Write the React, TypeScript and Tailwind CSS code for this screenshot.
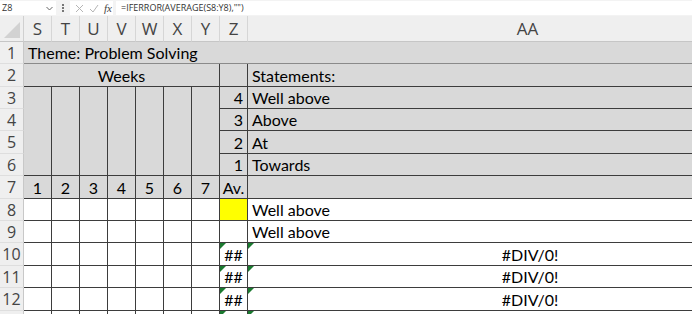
import type { ReactNode } from 'react'

const cols = ['S', 'T', 'U', 'V', 'W', 'X', 'Y', 'Z', 'AA']

// Error indicator Excel puts in the top-left corner of a cell
function ErrorMark() {
  return (
    <svg className="absolute left-0 top-0" width="6" height="6" viewBox="0 0 6 6">
      <polygon points="0,0 6,0 0,6" fill="#1b7a30" />
    </svg>
  )
}

function RowHead({ n }: { n?: number }) {
  return (
    <div className="flex items-center justify-center border-b border-r border-b-[#dedede] border-r-[#c8c8c8] bg-[#efefef] font-['Open_Sans',sans-serif] text-[16px] text-[#444]">
      {n}
    </div>
  )
}

function Cell({ className = '', children }: { className?: string; children?: ReactNode }) {
  return <div className={`relative flex items-end pb-[1px] leading-[18px] ${className}`}>{children}</div>
}

function FormulaBar() {
  return (
    <div className="flex h-[16px] items-center bg-[#f3f3f3] font-['Open_Sans',sans-serif] text-[9px] text-[#333]">
      <div className="flex h-[14px] w-[56px] items-center justify-between bg-white pl-[2px] pr-[3px]">
        <span>Z8</span>
        <svg width="7" height="5" viewBox="0 0 7 5">
          <path d="M0.5 1 L3.5 4 L6.5 1" fill="none" stroke="#666" strokeWidth="1" />
        </svg>
      </div>
      <div className="flex w-[14px] flex-col items-center justify-center gap-[1px]">
        <span className="h-[2px] w-[2px] bg-[#777]" />
        <span className="h-[2px] w-[2px] bg-[#777]" />
        <span className="h-[2px] w-[2px] bg-[#777]" />
      </div>
      <div className="flex h-[14px] w-[43px] items-center gap-[5px] bg-white pl-[5px]">
        <svg width="9" height="9" viewBox="0 0 9 9">
          <path d="M1 1 L8 8 M8 1 L1 8" stroke="#b5b5b5" strokeWidth="1" />
        </svg>
        <svg width="10" height="9" viewBox="0 0 10 9">
          <path d="M1 5 L4 8 L9 1" fill="none" stroke="#b5b5b5" strokeWidth="1" />
        </svg>
        <span className="font-['Liberation_Serif',serif] text-[11px] italic text-[#444]">fx</span>
      </div>
      <div className="ml-[3px] flex h-[14px] flex-1 items-center bg-white pl-[5px]">=IFERROR(AVERAGE(S8:Y8),"")</div>
    </div>
  )
}

export default function App() {
  const line = 'border-[#3d3d3d]'
  const gray = 'bg-[#d9d9d9]'

  return (
    <div className="h-[314px] w-[692px] overflow-hidden bg-white">
      <FormulaBar />
      <div className="grid w-[808px] grid-cols-[24px_repeat(8,28px)_560px] grid-rows-[26px_22px_23px_22px_22px_23px_22px_23px_22px_22px_23px_22px_23px_22px] font-['Lato',sans-serif] text-[16px] text-black">
        {/* column headers */}
        <div className="relative border-b border-r border-b-[#c6c6c6] border-r-[#d0d0d0] bg-[#efefef]">
          <svg className="absolute bottom-[3px] right-[3px]" width="16" height="16" viewBox="0 0 16 16">
            <polygon points="16,0 16,16 0,16" fill="#d2d2d2" />
          </svg>
        </div>
        {cols.map((c) => (
          <div
            key={c}
            className="flex items-center justify-center border-b border-r border-b-[#c6c6c6] border-r-[#d6d6d6] bg-[#efefef] pt-[1px] font-['Open_Sans',sans-serif] text-[17px] text-[#444]"
          >
            {c}
          </div>
        ))}

        {/* row 1 */}
        <RowHead n={1} />
        <Cell className={`col-span-9 border-b border-[#8a8a8a] ${gray} pl-[4px]`}>Theme: Problem Solving</Cell>

        {/* row 2 */}
        <RowHead n={2} />
        <Cell className={`col-span-7 justify-center border-b border-r ${line} ${gray}`}>Weeks</Cell>
        <Cell className={`border-b border-r ${line} ${gray}`} />
        <Cell className={`border-b ${line} ${gray} pl-[4px]`}>Statements:</Cell>

        {/* rows 3-6 */}
        <RowHead n={3} />
        {[0, 1, 2, 3, 4, 5, 6].map((i) => (
          <div key={i} className={`row-span-4 border-b border-r ${line} ${gray}`} />
        ))}
        <Cell className={`justify-end border-b border-r ${line} ${gray} pr-[4px]`}>4</Cell>
        <Cell className={`border-b ${line} ${gray} pl-[4px]`}>Well above</Cell>

        <RowHead n={4} />
        <Cell className={`justify-end border-b border-r ${line} ${gray} pr-[4px]`}>3</Cell>
        <Cell className={`border-b ${line} ${gray} pl-[4px]`}>Above</Cell>

        <RowHead n={5} />
        <Cell className={`justify-end border-b border-r ${line} ${gray} pr-[4px]`}>2</Cell>
        <Cell className={`border-b ${line} ${gray} pl-[4px]`}>At</Cell>

        <RowHead n={6} />
        <Cell className={`justify-end border-b border-r ${line} ${gray} pr-[4px]`}>1</Cell>
        <Cell className={`border-b ${line} ${gray} pl-[4px]`}>Towards</Cell>

        {/* row 7 */}
        <RowHead n={7} />
        {['1', '2', '3', '4', '5', '6', '7', 'Av.'].map((t) => (
          <Cell key={t} className={`justify-center border-b border-r ${line} ${gray}`}>
            {t}
          </Cell>
        ))}
        <Cell className={`border-b ${line} ${gray}`} />

        {/* rows 8-13 */}
        {[8, 9, 10, 11, 12, 13].map((r) => (
          <div key={r} className="contents">
            <RowHead n={r <= 12 ? r : undefined} />
            {[0, 1, 2, 3, 4, 5, 6].map((i) => (
              <Cell key={i} className={`border-b border-r ${line}`} />
            ))}
            <Cell className={`justify-center border-b border-r ${line} ${r === 8 ? 'bg-[#ffff00]' : ''}`}>
              {r >= 10 && <ErrorMark />}
              {r >= 10 && r <= 12 ? '##' : ''}
            </Cell>
            <Cell className={`border-b ${line} pl-[4px] ${r >= 10 ? 'justify-center' : ''}`}>
              {r >= 10 && <ErrorMark />}
              {r === 8 || r === 9 ? 'Well above' : r <= 12 ? '#DIV/0!' : ''}
            </Cell>
          </div>
        ))}
      </div>
    </div>
  )
}
